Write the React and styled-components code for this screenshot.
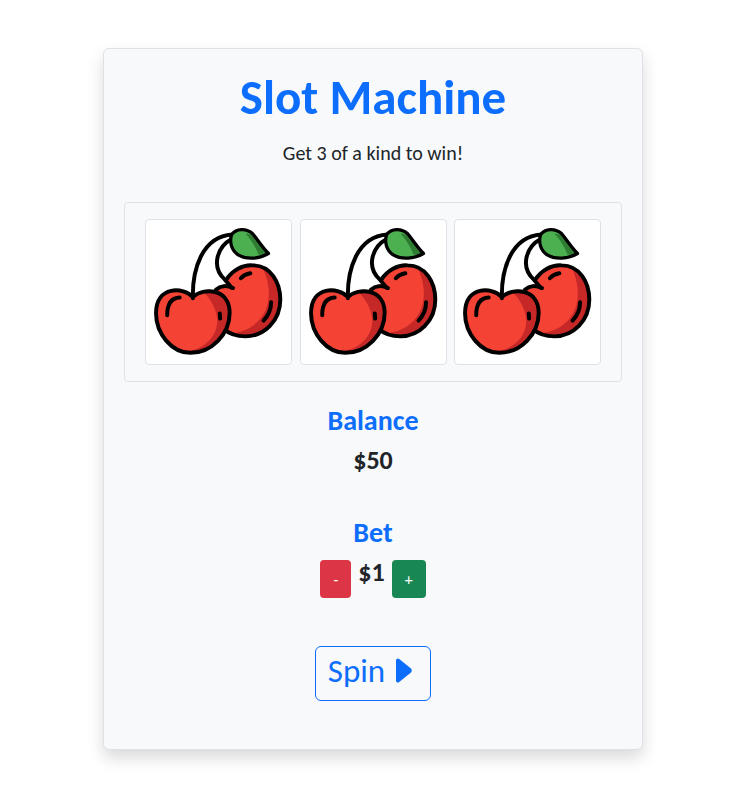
import React from "react";
import styled, { createGlobalStyle } from "styled-components";

const GlobalStyle = createGlobalStyle`
	* {
		box-sizing: border-box;
	}
	body {
		margin: 0;
		background-color: #fff;
		color: #212529;
		font-family: "Carlito", "Calibri", "Lato", "Liberation Sans", sans-serif;
	}
`;

const Cherry = () => (
	<CherrySvg viewBox="17 28 438 438">
		<path
			d="M225 240 C240 228 250 225 258 222 C275 180 310 164 340 166 C395 166 424 218 424 270 C424 335 375 382 318 382 C290 382 268 374 250 358 Z"
			fill="#f44335"
		/>
		<path
			d="M372 176 C405 195 424 232 424 270 C424 335 375 382 318 382 C300 382 285 378 270 372 C345 372 425 300 372 176 Z"
			fill="#c62828"
		/>
		<path
			d="M258 212 C278 180 310 164 340 166 C395 166 424 218 424 270 C424 335 375 382 318 382 C290 382 268 374 250 358"
			fill="none"
			stroke="#000"
			strokeWidth="12"
			strokeLinecap="round"
			strokeLinejoin="round"
		/>
		<path
			d="M228 240 C242 228 262 226 280 235"
			fill="none"
			stroke="#000"
			strokeWidth="12"
			strokeLinecap="round"
		/>
		<path
			d="M158 262 C130 232 46 226 46 312 C46 375 95 432 150 432 C215 432 270 375 270 310 C270 236 190 232 158 262 Z"
			fill="#f44335"
		/>
		<path
			d="M186 242 C230 232 270 258 270 310 C270 375 215 432 150 432 C140 432 135 430 130 428 C205 428 285 345 186 242 Z"
			fill="#c62828"
		/>
		<path
			d="M158 262 C130 232 46 226 46 312 C46 375 95 432 150 432 C215 432 270 375 270 310 C270 236 190 232 158 262 Z"
			fill="none"
			stroke="#000"
			strokeWidth="12"
			strokeLinejoin="round"
		/>
		<g fill="none" stroke="#000" strokeWidth="12" strokeLinecap="round">
			<path d="M158 266 C156 180 185 78 278 72" />
			<path d="M276 86 C232 110 212 170 256 210 L276 234" />
			<path d="M240 312 L241 328" />
			<path d="M80 318 C80 285 92 265 118 264" />
			<path d="M304 205 C312 196 322 192 333 190" />
			<path d="M396 278 C396 300 388 318 373 334" />
		</g>
		<path
			d="M276 72 C290 54 320 52 340 70 C358 92 372 114 388 130 C360 146 322 150 296 134 C276 120 268 96 276 72 Z"
			fill="#4caf50"
		/>
		<path
			d="M318 70 C328 70 336 72 340 76 C358 92 372 114 384 128 L358 134 C350 112 334 86 318 70 Z"
			fill="#2e7d32"
		/>
		<path
			d="M276 72 C290 54 320 52 340 70 C358 92 372 114 388 130 C360 146 322 150 296 134 C276 120 268 96 276 72 Z"
			fill="none"
			stroke="#000"
			strokeWidth="10"
			strokeLinejoin="round"
		/>
	</CherrySvg>
);

const PlayIcon = () => (
	<PlaySvg viewBox="0 0 16 25">
		<path d="M0 2.5 C0 .6 1.8 -.2 3.2 1 L15 10.6 C16 11.6 16 13.4 15 14.4 L3.2 24 C1.8 25.2 0 24.4 0 22.5 Z" />
	</PlaySvg>
);

const App = () => {
	const reels = [1, 2, 3];

	return (
		<>
			<GlobalStyle />
			<StPage>
				<StCard>
					<StTitle>Slot Machine</StTitle>
					<StSubtitle>Get 3 of a kind to win!</StSubtitle>
					<StReels>
						{reels.map((reel) => (
							<StReel key={reel}>
								<Cherry />
							</StReel>
						))}
					</StReels>
					<StHeading>Balance</StHeading>
					<StAmount>$50</StAmount>
					<StBetHeading>Bet</StBetHeading>
					<StBetRow>
						<StBetButton $color="#dc3545">-</StBetButton>
						<StBetAmount>$1</StBetAmount>
						<StBetButton $color="#198754">+</StBetButton>
					</StBetRow>
					<StSpinButton>
						Spin <PlayIcon />
					</StSpinButton>
				</StCard>
			</StPage>
		</>
	);
};

export default App;

const StPage = styled.div`
	display: flex;
	justify-content: center;
	padding-top: 48px;
	height: 809px;
`;
const StCard = styled.div`
	display: flex;
	flex-direction: column;
	align-items: center;
	width: 540px;
	height: 702px;
	padding: 24px 20px;
	background-color: #f8f9fa;
	border: 1px solid #dee2e6;
	border-radius: 6px;
	box-shadow: 0 8px 16px rgba(0, 0, 0, 0.15);
`;
const StTitle = styled.h1`
	margin: 0 0 8px;
	font-size: 49px;
	font-weight: 700;
	line-height: 48px;
	color: #0d6efd;
`;
const StSubtitle = styled.p`
	margin: 9px 0 34px;
	font-size: 20px;
	line-height: 30px;
`;
const StReels = styled.div`
	display: grid;
	grid-template-columns: repeat(3, 147px);
	justify-content: center;
	gap: 7.5px;
	width: 498px;
	padding: 16px 20px;
	border: 1px solid #dee2e6;
	border-radius: 4px;
`;
const StReel = styled.div`
	height: 146px;
	background-color: #fff;
	border: 1px solid #dee2e6;
	border-radius: 4px;
`;
const CherrySvg = styled.svg`
	display: block;
	width: 100%;
	height: 100%;
`;
const StHeading = styled.h3`
	margin: 21px 0 0;
	font-size: 28px;
	font-weight: 700;
	line-height: 36px;
	color: #0d6efd;
`;
const StAmount = styled.div`
	margin-top: 6px;
	font-size: 26px;
	font-weight: 700;
	line-height: 30px;
`;
const StBetHeading = styled(StHeading)`
	margin-top: 40px;
`;
const StBetRow = styled.div`
	display: flex;
	align-items: flex-start;
	gap: 7px;
	margin-top: 9px;
`;
const StBetButton = styled.button`
	height: 38px;
	padding: 0 13px;
	font-family: inherit;
	font-size: 16px;
	color: #fff;
	background-color: ${(props) => props.$color};
	border: 0;
	border-radius: 4px;
`;
const StBetAmount = styled.div`
	font-size: 26px;
	font-weight: 700;
	line-height: 24px;
`;
const StSpinButton = styled.button`
	display: flex;
	align-items: center;
	gap: 11px;
	height: 55px;
	margin-top: 48px;
	padding: 0 18px 6px 12px;
	font-family: inherit;
	font-size: 33px;
	color: #0d6efd;
	background-color: transparent;
	border: 1px solid #0d6efd;
	border-radius: 6px;
`;
const PlaySvg = styled.svg`
	width: 16px;
	height: 25px;
	fill: #0d6efd;
`;
